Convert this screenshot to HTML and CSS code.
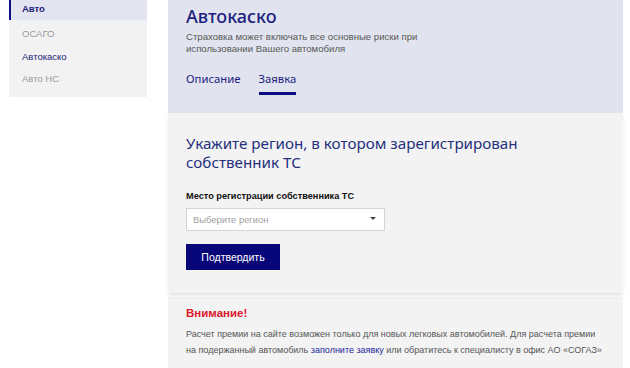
FILE: index.html
```html
<!DOCTYPE html>
<html>
  <head>
    <meta charset="utf-8">
    <link rel="stylesheet" href="styles.css">
  </head>
  <body>
    <div class="page">
      <aside class="sidebar">
        <a class="side-item active">Авто</a>
        <a class="side-item muted">ОСАГО</a>
        <a class="side-item">Автокаско</a>
        <a class="side-item muted">Авто НС</a>
      </aside>

      <main class="content">
        <section class="product-head">
          <h1 class="product-title">Автокаско</h1>
          <p class="product-desc">Страховка может включать все основные риски при<br>использовании Вашего автомобиля</p>
          <nav class="tabs">
            <a class="tab">Описание</a>
            <a class="tab current">Заявка</a>
          </nav>
        </section>

        <section class="request">
          <h2 class="request-title">Укажите регион, в котором зарегистрирован<br>собственник ТС</h2>
          <label class="field-label">Место регистрации собственника ТС</label>
          <div class="select">
            <span class="select-placeholder">Выберите регион</span>
            <span class="select-caret"></span>
          </div>
          <button class="btn-primary">Подтвердить</button>
        </section>

        <section class="notice">
          <h3 class="notice-title">Внимание!</h3>
          <p class="notice-text">Расчет премии на сайте возможен только для новых легковых автомобилей. Для расчета премии<br>на подержанный автомобиль <a class="link">заполните заявку</a> или обратитесь к специалисту в офис АО «СОГАЗ»</p>
        </section>
      </main>
    </div>
  </body>
</html>
```

FILE: styles.css
```css
body {
  margin: 0;
  background: #fff;
  font-family: "Liberation Sans", Arial, sans-serif;
  color: #333;
}

.page {
  display: flex;
  align-items: flex-start;
  height: 368px;
  overflow: hidden;
}

/* sidebar */
.sidebar {
  width: 138px;
  margin-left: 9px;
  padding-bottom: 6px;
  background: #f2f2f3;
  display: flex;
  flex-direction: column;
}

.side-item {
  display: block;
  height: 22.5px;
  line-height: 22.5px;
  padding-left: 13px;
  font-size: 9.5px;
  color: #1b1f7a;
}

.side-item.muted {
  color: #9a9a9a;
}

.side-item.active {
  height: 20px;
  line-height: 17px;
  padding-left: 11px;
  margin-bottom: 3px;
  border-left: 2px solid #0d0d85;
  background: #e2e5ef;
  font-weight: bold;
}

/* main column */
.content {
  width: 455px;
  margin-left: 21px;
  display: flex;
  flex-direction: column;
}

.product-head {
  background: #e1e4ee;
  height: 113px;
  box-sizing: border-box;
  padding: 4px 18px 0;
}

.product-title {
  margin: 0;
  font-family: "Noto Sans", sans-serif;
  font-weight: 500;
  font-size: 18px;
  line-height: 24px;
  color: #1c2180;
}

.product-desc {
  margin: 3px 0 0;
  font-size: 9.6px;
  line-height: 12px;
  color: #585858;
}

.tabs {
  display: flex;
  gap: 18px;
  margin-top: 16px;
}

.tab {
  font-family: "Noto Sans", sans-serif;
  font-size: 11.3px;
  line-height: 16px;
  color: #1c2180;
  padding-bottom: 5px;
  border-bottom: 3px solid transparent;
}

.tab.current {
  border-bottom-color: #0b0b82;
}

.request {
  position: relative;
  z-index: 1;
  background: #f3f3f3;
  height: 180px;
  box-sizing: border-box;
  padding: 21px 18px 0;
  box-shadow: 0 3px 4px -1px rgba(0, 0, 0, 0.14);
}

.request-title {
  margin: 0;
  font-family: "Noto Sans", sans-serif;
  font-weight: normal;
  font-size: 15.2px;
  line-height: 19px;
  color: #25307c;
}

.field-label {
  display: block;
  margin-top: 19px;
  font-size: 9.2px;
  font-weight: bold;
  color: #111;
}

.select {
  display: flex;
  align-items: center;
  justify-content: space-between;
  width: 199px;
  height: 23px;
  box-sizing: border-box;
  margin-top: 7px;
  padding: 0 8px 0 6px;
  background: #fff;
  border: 1px solid #d4d4d4;
}

.select-placeholder {
  font-size: 9.4px;
  color: #a0a0a0;
}

.select-caret {
  width: 0;
  height: 0;
  border-left: 3px solid transparent;
  border-right: 3px solid transparent;
  border-top: 3px solid #444;
  margin-top: -3px;
}

.btn-primary {
  display: block;
  width: 94px;
  height: 26px;
  margin-top: 13px;
  border: 0;
  background: #07077a;
  color: #fff;
  font-family: "Liberation Sans", Arial, sans-serif;
  font-size: 10.5px;
}

.notice {
  margin-top: 4px;
  background: #f3f3f3;
  height: 80px;
  padding: 10px 18px 0;
}

.notice-title {
  margin: 0;
  font-size: 11.5px;
  color: #e0182d;
}

.notice-text {
  margin: 7px 0 0;
  font-size: 9px;
  line-height: 16px;
  color: #555;
  white-space: nowrap;
}

.link {
  color: #1b1f9a;
}
```
